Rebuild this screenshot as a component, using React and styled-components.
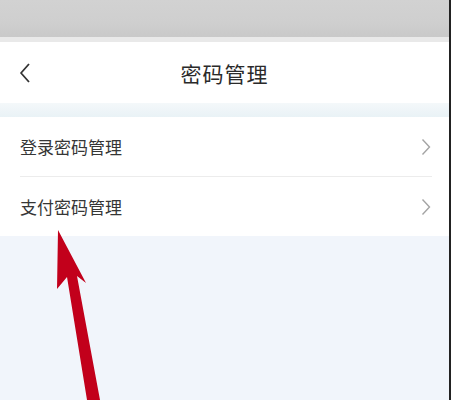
import React from 'react';
import styled, { createGlobalStyle } from 'styled-components';

const GlobalStyle = createGlobalStyle`
    html, body {
        margin: 0;
        padding: 0;
        background: #f1f5fb;
    }
    body {
        font-family: "Noto Sans CJK SC", "Noto Sans", sans-serif;
    }
`;

export default function App() {
    return (
        <>
            <GlobalStyle />
            <PageStyled>
                <StatusBar />
                <StatusEdge />
                <Header>
                    <BackButton aria-label="返回">
                        <svg width="14" height="22" viewBox="0 0 14 22">
                            <path d="M11 2 L3 11 L11 20" fill="none" stroke="#333" strokeWidth="1.8" strokeLinejoin="round" />
                        </svg>
                    </BackButton>
                    <Title>密码管理</Title>
                </Header>
                <Band />
                <List>
                    <Row>
                        <RowText>登录密码管理</RowText>
                        <Chevron />
                    </Row>
                    <Row last>
                        <RowText>支付密码管理</RowText>
                        <Chevron />
                    </Row>
                </List>
                <Arrow width="120" height="175" viewBox="0 0 120 175">
                    <path d="M58 5 L57 64 L67 52 L87 175 L100 175 L77 51 L86 58 Z" fill="#c2001b" />
                </Arrow>
            </PageStyled>
        </>
    );
}

function Chevron() {
    return (
        <svg width="10" height="18" viewBox="0 0 10 18">
            <path d="M1.5 1.5 L8.5 9 L1.5 16.5" fill="none" stroke="#a4a4a4" strokeWidth="1.4" />
        </svg>
    );
}

const PageStyled = styled.div`
    position: relative;
    width: 451px;
    height: 400px;
    overflow: hidden;
    background: #f1f5fb;
    box-sizing: border-box;
    border-right: 2px solid #222;
`;

const StatusBar = styled.div`
    height: 37px;
    background: linear-gradient(180deg, #d2d2d2 0%, #cfcfcf 60%, #c9c9c9 100%);
`;

const StatusEdge = styled.div`
    height: 5px;
    background: #e9e9e9;
`;

const Header = styled.div`
    position: relative;
    height: 61px;
    background: #fff;
    display: flex;
    align-items: center;
    justify-content: center;
`;

const BackButton = styled.div`
    position: absolute;
    left: 18px;
    top: 50%;
    transform: translateY(-50%);
    display: flex;
`;

const Title = styled.div`
    font-size: 21px;
    color: #2a2a2a;
    letter-spacing: 1px;
`;

const Band = styled.div`
    height: 14px;
    background: linear-gradient(180deg, #f4f8fa 0%, #e9f2f6 100%);
`;

const List = styled.div`
    background: #fff;
    padding-left: 20px;
`;

const Row = styled.div`
    height: 59px;
    display: flex;
    align-items: center;
    justify-content: space-between;
    margin-right: 17px;
    padding-right: 1px;
    border-bottom: ${({ last }) => (last ? 'none' : '1px solid #ececec')};
`;

const RowText = styled.div`
    font-size: 17px;
    color: #363636;
`;

const Arrow = styled.svg`
    position: absolute;
    left: 0;
    top: 225px;
`;
